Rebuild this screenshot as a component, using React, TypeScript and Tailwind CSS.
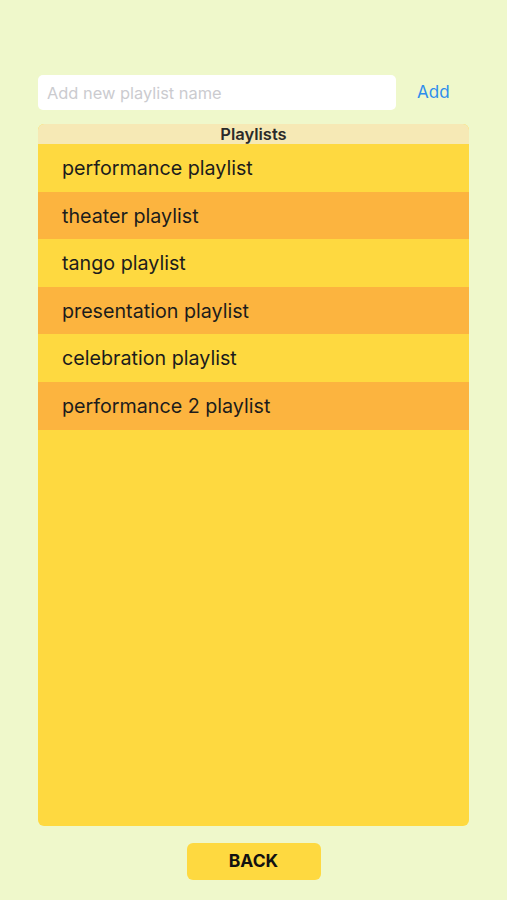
import React from "react";

const playlists = [
  "performance playlist",
  "theater playlist",
  "tango playlist",
  "presentation playlist",
  "celebration playlist",
  "performance 2 playlist",
];

export default function App() {
  return (
    <div className="w-[507px] h-[900px] bg-[#eff8cb] flex flex-col px-[38px] pt-[75px] font-['Inter',sans-serif] text-[#1c1c1c]">
      <div className="flex items-center">
        <input
          className="w-[358px] h-[35px] bg-white rounded-[5px] px-[9px] text-[16.4px] placeholder-[#cbcbcf] outline-none"
          placeholder="Add new playlist name"
        />
        <button className="ml-[21px] text-[17px] text-[#2e8ded]">Add</button>
      </div>

      <div className="mt-[14px] h-[702px] bg-[#fed940] rounded-[6px] overflow-hidden flex flex-col">
        <div className="h-[20px] bg-[#f6e9b5] flex items-center justify-center text-[16.5px] font-semibold text-[#2a2a2a]">
          Playlists
        </div>
        <ul>
          {playlists.map((name, i) => (
            <li
              key={name}
              className={
                "h-[47.6px] flex items-center pl-[24px] pt-[2px] text-[19.7px] " +
                (i % 2 === 1 ? "bg-[#fcb43f]" : "bg-[#fed940]")
              }
            >
              {name}
            </li>
          ))}
        </ul>
      </div>

      <div className="flex justify-center mt-[17px]">
        <button className="w-[134px] h-[37px] bg-[#fed940] rounded-[6px] text-[17.5px] font-bold text-[#111]">
          BACK
        </button>
      </div>
    </div>
  );
}
